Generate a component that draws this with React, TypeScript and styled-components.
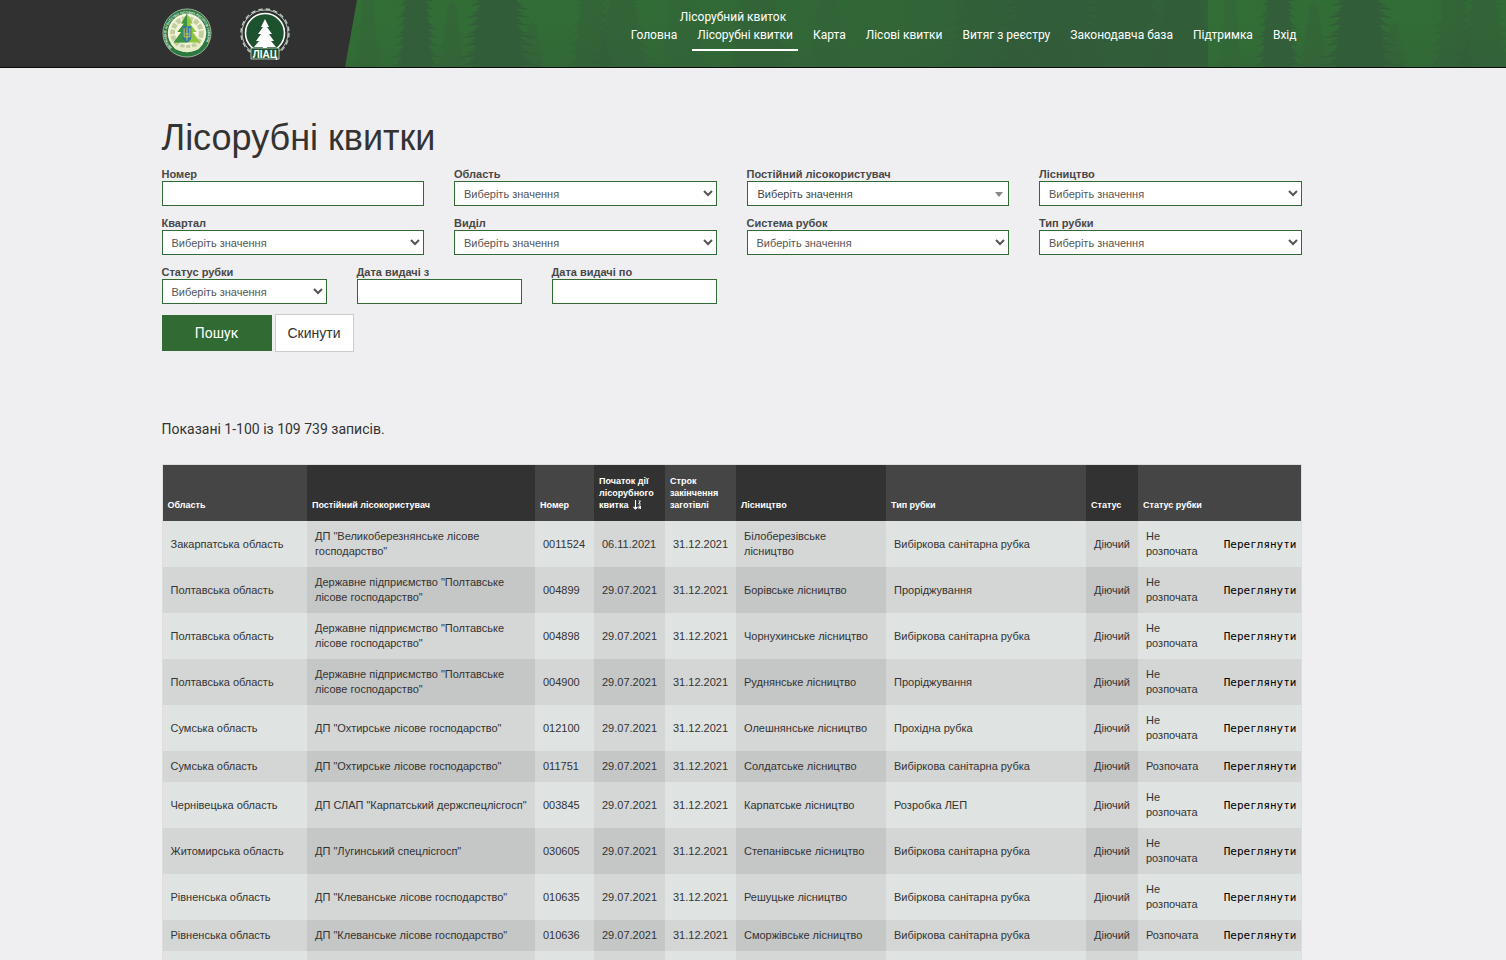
import React from 'react';
import styled, { createGlobalStyle } from 'styled-components';

const GlobalStyle = createGlobalStyle`
  * {
    box-sizing: border-box;
  }

  body {
    margin: 0;
    background: #efeff1;
    color: #333;
    font-family: Roboto, 'Liberation Sans', sans-serif;
    font-size: 14px;
    line-height: 20px;
    overflow: hidden;
  }
`;

const Page = styled.div`
  width: 100%;
`;

const Header = styled.header`
  display: grid;
  height: 68px;
  background: #326a33;
  border-bottom: 1px solid #0a0d0a;
  overflow: hidden;

  > * {
    grid-area: 1 / 1;
  }
`;

const Forest = styled.svg`
  width: 100%;
  height: 67px;
  display: block;
`;

const Container = styled.div`
  width: 100%;
  max-width: 1213px;
  margin: 0 auto;
  padding: 0 58px 0 15px;
`;

const HeaderRow = styled(Container)`
  display: flex;
  justify-content: space-between;
  align-items: flex-start;
`;

const Logos = styled.div`
  display: flex;
  gap: 28px;
  padding-top: 8px;
`;

const LogoLink = styled.a`
  display: block;
  width: 50px;
  height: 52px;
`;

const NavArea = styled.div`
  display: flex;
  flex-direction: column;
  padding-top: 9px;
`;

const TopLink = styled.a`
  align-self: flex-start;
  margin-left: 54px;
  color: #fff;
  font-size: 12px;
  line-height: 16px;
  text-decoration: none;
`;

const Nav = styled.nav`
  display: flex;
  gap: 10px;
`;

const NavLink = styled.a<{ $active?: boolean }>`
  padding: 0 5px;
  height: 26px;
  color: #fff;
  font-size: 12px;
  line-height: 20px;
  text-decoration: none;
  white-space: nowrap;
  border-bottom: 2px solid ${props => (props.$active ? '#fff' : 'transparent')};
`;

const Main = styled(Container).attrs({ as: 'main' })`
  padding-top: 50px;
`;

const Title = styled.h1`
  margin: 0 0 9px;
  font-family: 'Liberation Sans', sans-serif;
  font-size: 36px;
  font-weight: 400;
  line-height: 40px;
`;

const Filters = styled.form`
  font-family: 'Liberation Sans', sans-serif;
`;

const FieldRow = styled.div<{ $columns: number }>`
  display: grid;
  grid-template-columns: repeat(${props => props.$columns}, minmax(0, 1fr));
  column-gap: 30px;
  margin-bottom: 10px;
`;

const Field = styled.div`
  display: flex;
  flex-direction: column;
`;

const Label = styled.label`
  color: #484848;
  font-size: 11px;
  font-weight: 700;
  line-height: 14px;
`;

const Input = styled.input`
  width: 100%;
  height: 25px;
  padding: 0 8px;
  border: 1px solid #326a33;
  border-radius: 0;
  background: #fff;
  color: #555;
  font-family: 'Liberation Sans', sans-serif;
  font-size: 11px;
`;

const Select = styled.select`
  width: 100%;
  height: 25px;
  padding: 0 5px;
  border: 1px solid #326a33;
  border-radius: 0;
  background: #fff;
  color: #555;
  font-family: 'Liberation Sans', sans-serif;
  font-size: 11px;
`;

const SearchableSelect = styled(Select)`
  appearance: none;
  padding: 0 10px;
  color: #444;
  background: #fff
    url("data:image/svg+xml,%3Csvg xmlns='http://www.w3.org/2000/svg' width='8' height='5'%3E%3Cpath d='M0 0h8L4 5z' fill='%23888'/%3E%3C/svg%3E")
    no-repeat right 5px top 10px;
`;

const Buttons = styled.div`
  display: flex;
  align-items: center;
  gap: 3px;
`;

const Button = styled.button<{ $primary?: boolean }>`
  width: ${props => (props.$primary ? '110px' : '79px')};
  height: ${props => (props.$primary ? '36px' : '38px')};
  padding: 0;
  border: ${props => (props.$primary ? 'none' : '1px solid #ccc')};
  background: ${props => (props.$primary ? '#326a33' : '#fff')};
  color: ${props => (props.$primary ? '#fff' : '#333')};
  font-family: ${props => (props.$primary ? 'Roboto' : "'Liberation Sans'")}, sans-serif;
  font-size: 14px;
  cursor: pointer;
`;

const Summary = styled.p`
  margin: 67px 0 25px;
`;

const Table = styled.table`
  width: 100%;
  table-layout: fixed;
  border-collapse: collapse;
  border: 1px solid #ddd;
  font-family: 'Liberation Sans', sans-serif;
`;

const Col = styled.col<{ $width?: number }>`
  width: ${props => (props.$width ? `${props.$width}px` : 'auto')};
`;

const HeadCell = styled.th<{ $dark?: boolean }>`
  height: 56px;
  padding: 10px 5px;
  background: ${props => (props.$dark ? '#323232' : '#454545')};
  color: #fff;
  font-size: 9px;
  font-weight: 700;
  line-height: 12px;
  text-align: left;
  vertical-align: bottom;
`;

const SortLink = styled.a`
  color: #fff;
  text-decoration: none;

  svg {
    margin-left: 4px;
    vertical-align: -2px;
  }
`;

const Row = styled.tr`
  background: #dfe3e2;

  &:nth-child(even) {
    background: #d4d6d5;
  }
`;

const Cell = styled.td<{ $dark?: boolean }>`
  padding: 8px;
  background: ${props => (props.$dark ? '#d5d6d6' : 'transparent')};
  font-size: 11px;
  line-height: 15px;
  vertical-align: middle;

  ${Row}:nth-child(even) & {
    background: ${props => (props.$dark ? '#c5c6c6' : 'transparent')};
  }
`;

const ActionCell = styled(Cell)`
  padding: 8px 4px;
  text-align: right;
`;

const ViewLink = styled.a`
  color: #000;
  font-family: 'DejaVu Sans Mono', monospace;
  text-decoration: none;
`;

const navItems = [
  'Головна',
  'Лісорубні квитки',
  'Карта',
  'Лісові квитки',
  'Витяг з реєстру',
  'Законодавча база',
  'Підтримка',
  'Вхід',
];

const columns = [
  { label: 'Область', width: 145 },
  { label: 'Постійний лісокористувач', width: 228, dark: true },
  { label: 'Номер', width: 59 },
  { label: 'Початок дії лісорубного квитка', width: 71, dark: true, sorted: true },
  { label: 'Строк закінчення заготівлі', width: 71 },
  { label: 'Лісництво', width: 150, dark: true },
  { label: 'Тип рубки', width: 200 },
  { label: 'Статус', width: 52, dark: true },
  { label: 'Статус рубки', width: 70 },
  { label: '' },
];

const SANITARY = 'Вибіркова санітарна рубка';
const POLTAVA = 'Державне підприємство "Полтавське лісове господарство"';
const END = '31.12.2021';

const tickets = [
  ['Закарпатська область', 'ДП "Великоберезнянське лісове господарство"', '0011524', '06.11.2021', END, 'Білоберезівське лісництво', SANITARY, 'Діючий', 'Не розпочата'],
  ['Полтавська область', POLTAVA, '004899', '29.07.2021', END, 'Борівське лісництво', 'Проріджування', 'Діючий', 'Не розпочата'],
  ['Полтавська область', POLTAVA, '004898', '29.07.2021', END, 'Чорнухинське лісництво', SANITARY, 'Діючий', 'Не розпочата'],
  ['Полтавська область', POLTAVA, '004900', '29.07.2021', END, 'Руднянське лісництво', 'Проріджування', 'Діючий', 'Не розпочата'],
  ['Сумська область', 'ДП "Охтирське лісове господарство"', '012100', '29.07.2021', END, 'Олешнянське лісництво', 'Прохідна рубка', 'Діючий', 'Не розпочата'],
  ['Сумська область', 'ДП "Охтирське лісове господарство"', '011751', '29.07.2021', END, 'Солдатське лісництво', SANITARY, 'Діючий', 'Розпочата'],
  ['Чернівецька область', 'ДП СЛАП "Карпатський держспецлісгосп"', '003845', '29.07.2021', END, 'Карпатське лісництво', 'Розробка ЛЕП', 'Діючий', 'Не розпочата'],
  ['Житомирська область', 'ДП "Лугинський спецлісгосп"', '030605', '29.07.2021', END, 'Степанівське лісництво', SANITARY, 'Діючий', 'Не розпочата'],
  ['Рівненська область', 'ДП "Клеванське лісове господарство"', '010635', '29.07.2021', END, 'Решуцьке лісництво', SANITARY, 'Діючий', 'Не розпочата'],
  ['Рівненська область', 'ДП "Клеванське лісове господарство"', '010636', '29.07.2021', END, 'Сморжівське лісництво', SANITARY, 'Діючий', 'Розпочата'],
];

// A ragged conifer silhouette, widening towards the bottom
const treePath = (x: number, top: number, width: number, height: number) => {
  const steps = Math.round(height / 4);
  const left: string[] = [];
  const right: string[] = [];
  for (let i = 1; i <= steps; i++) {
    const y = top + (height * i) / steps;
    const w = (width / 2) * (0.2 + (0.8 * i) / steps);
    const l = w * (0.7 + ((i * 7) % 5) / 10);
    const r = w * (0.7 + ((i * 3) % 7) / 14);
    left.push(`L${x - l} ${y} L${x - w * 0.6} ${y - 1}`);
    right.unshift(`L${x + w * 0.6} ${y - 1} L${x + r} ${y}`);
  }
  return `M${x} ${top} ${left.join(' ')} ${right.join(' ')} Z`;
};

const trees = [
  [22, -40, 34, 130, 0.25],
  [70, -90, 54, 180, 0.7],
  [106, 2, 46, 90, 0.35],
  [152, -110, 88, 200, 0.85],
  [186, 22, 44, 70, 0.35],
  [246, -60, 60, 150, 0.4],
  [276, -30, 90, 130, 0.4],
  [338, -60, 70, 150, 0.2],
  [412, -70, 90, 160, 0.3],
  [482, -50, 60, 140, 0.2],
  [640, -80, 120, 170, 0.4],
  [706, -140, 150, 230, 0.7],
  [780, -100, 130, 190, 0.5],
  [836, -60, 90, 140, 0.5],
];

const ForestBackdrop: React.FC = () => (
  <Forest aria-hidden="true">
    <defs>
      <linearGradient id="shade">
        <stop offset="0" stopColor="#315f38" stopOpacity="0" />
        <stop offset="0.35" stopColor="#315f38" stopOpacity="0.2" />
        <stop offset="0.75" stopColor="#315f38" stopOpacity="0.7" />
        <stop offset="1" stopColor="#315f38" stopOpacity="0.8" />
      </linearGradient>
      <linearGradient id="floor" x2="0" y2="1">
        <stop offset="0.3" stopColor="#325a3a" stopOpacity="0" />
        <stop offset="1" stopColor="#325a3a" stopOpacity="0.2" />
      </linearGradient>
      <pattern id="forest" x="346" width="862" height="67" patternUnits="userSpaceOnUse">
        <rect width="862" height="67" fill="#326e36" />
        <rect width="862" height="67" fill="url(#shade)" />
        <rect width="862" height="67" fill="url(#floor)" />
        {trees.map(([x, top, width, height, opacity]) => (
          <path key={x} d={treePath(x, top, width, height)} fill="#325a3a" opacity={opacity} />
        ))}
      </pattern>
    </defs>
    <rect width="100%" height="67" fill="url(#forest)" />
    <path d="M0 0H357L345 67H0z" fill="#323132" />
  </Forest>
);

const AgencyLogo: React.FC = () => (
  <svg width="50" height="50" viewBox="0 0 52 52">
    <defs>
      <path id="ring" d="M10 41.5A21.5 21.5 0 1 1 42 41.5" />
    </defs>
    <circle cx="26" cy="26" r="25" fill="#2c7840" stroke="#b9d3b9" strokeWidth="0.8" />
    <circle cx="26" cy="26" r="20" fill="#f2f5dc" />
    <circle cx="26" cy="26" r="15" fill="none" stroke="#c3cd9f" strokeWidth="5" strokeDasharray="5 1.5" />
    <path d="M9 37Q26 46 43 37L38 43Q26 49 14 43z" fill="#e8edc9" />
    <path d="M26 6l-6 10h3l-7 9h4l-8 11h28l-8-11h4l-7-9h3z" fill="#8fc43d" />
    <path d="M26 6l-6 10h3l-7 9h4l-8 11h14z" fill="#3c9440" />
    <path d="M21.5 19h9v11q0 4-4.5 6-4.5-2-4.5-6z" fill="#2d75a8" />
    <path d="M23 21v9h6v-9M26 20v14M24 27h4" fill="none" stroke="#dccb42" strokeWidth="1" />
    <text fill="#e5efe3" fontFamily="Liberation Sans, sans-serif" fontSize="3.4" fontWeight="700">
      <textPath href="#ring">ДЕРЖАВНЕ АГЕНТСТВО ЛІСОВИХ РЕСУРСІВ УКРАЇНИ</textPath>
    </text>
  </svg>
);

const CenterLogo: React.FC = () => (
  <svg width="50" height="52" viewBox="0 0 50 52">
    <circle cx="25" cy="25" r="23" fill="#323132" stroke="#b9cbbd" strokeWidth="1" />
    <circle cx="25" cy="25" r="24" fill="none" stroke="#b9cbbd" strokeWidth="1.4" strokeDasharray="4.5 3.04" />
    <circle cx="25" cy="25" r="19.5" fill="#1c522d" stroke="#fff" strokeWidth="1.6" />
    <path d="M11 40h28v11H11z" fill="#1c522d" stroke="#c8d8ca" strokeWidth="0.8" />
    <path d="M25 11l-4 8h2l-5 7h3l-5 7h3l-5 6h9v1h4v-1h9l-5-6h3l-5-7h3l-5-7h2z" fill="#fff" />
    <text x="25" y="49.5" fill="#fff" fontFamily="Liberation Sans, sans-serif" fontSize="10" fontWeight="700" textAnchor="middle">
      ЛІАЦ
    </text>
  </svg>
);

const SortIcon: React.FC = () => (
  <svg width="9" height="10" viewBox="0 0 9 10" fill="none" stroke="#fff" aria-hidden="true">
    <path d="M2.5 0v9M0.5 7l2 2 2-2" strokeWidth="1.1" />
    <path d="M5.5 1h2L5.5 4h2.3M6 9V6h1.5v3M6 7.5h1.5" strokeWidth="0.9" />
  </svg>
);

interface SelectFieldProps {
  id: string;
  label: string;
  searchable?: boolean;
}

const SelectField: React.FC<SelectFieldProps> = ({ id, label, searchable }) => {
  const Control = searchable ? SearchableSelect : Select;
  return (
    <Field>
      <Label htmlFor={id}>{label}</Label>
      <Control id={id}>
        <option>Виберіть значення</option>
      </Control>
    </Field>
  );
};

const InputField: React.FC<{ id: string; label: string }> = ({ id, label }) => (
  <Field>
    <Label htmlFor={id}>{label}</Label>
    <Input id={id} type="text" />
  </Field>
);

const App: React.FC = () => {
  return (
    <Page>
      <GlobalStyle />
      <Header>
        <ForestBackdrop />
        <HeaderRow>
          <Logos>
            <LogoLink href="#"><AgencyLogo /></LogoLink>
            <LogoLink href="#"><CenterLogo /></LogoLink>
          </Logos>
          <NavArea>
            <TopLink href="#">Лісорубний квиток</TopLink>
            <Nav>
              {navItems.map((item, index) => (
                <NavLink key={item} href="#" $active={index === 1}>{item}</NavLink>
              ))}
            </Nav>
          </NavArea>
        </HeaderRow>
      </Header>

      <Main>
        <Title>Лісорубні квитки</Title>
        <Filters onSubmit={e => e.preventDefault()}>
          <FieldRow $columns={4}>
            <InputField id="number" label="Номер" />
            <SelectField id="region" label="Область" />
            <SelectField id="user" label="Постійний лісокористувач" searchable />
            <SelectField id="forestry" label="Лісництво" />
          </FieldRow>
          <FieldRow $columns={4}>
            <SelectField id="quarter" label="Квартал" />
            <SelectField id="section" label="Виділ" />
            <SelectField id="system" label="Система рубок" />
            <SelectField id="type" label="Тип рубки" />
          </FieldRow>
          <FieldRow $columns={6}>
            <SelectField id="status" label="Статус рубки" />
            <InputField id="from" label="Дата видачі з" />
            <InputField id="to" label="Дата видачі по" />
          </FieldRow>
          <Buttons>
            <Button type="submit" $primary>Пошук</Button>
            <Button type="reset">Скинути</Button>
          </Buttons>
        </Filters>

        <Summary>Показані 1-100 із 109 739 записів.</Summary>

        <Table>
          <colgroup>
            {columns.map(column => (
              <Col key={column.label} $width={column.width} />
            ))}
          </colgroup>
          <thead>
            <tr>
              {columns.map(column => (
                <HeadCell key={column.label} $dark={column.dark}>
                  {column.sorted ? (
                    <SortLink href="#">{column.label}<SortIcon /></SortLink>
                  ) : (
                    column.label
                  )}
                </HeadCell>
              ))}
            </tr>
          </thead>
          <tbody>
            {tickets.map(ticket => (
              <Row key={ticket[2]}>
                {ticket.map((value, index) => (
                  <Cell key={index} $dark={columns[index].dark}>{value}</Cell>
                ))}
                <ActionCell>
                  <ViewLink href="#">Переглянути</ViewLink>
                </ActionCell>
              </Row>
            ))}
            <Row>
              {columns.map(column => (
                <Cell key={column.label} $dark={column.dark}>&nbsp;</Cell>
              ))}
            </Row>
          </tbody>
        </Table>
      </Main>
    </Page>
  );
};

export default App;
